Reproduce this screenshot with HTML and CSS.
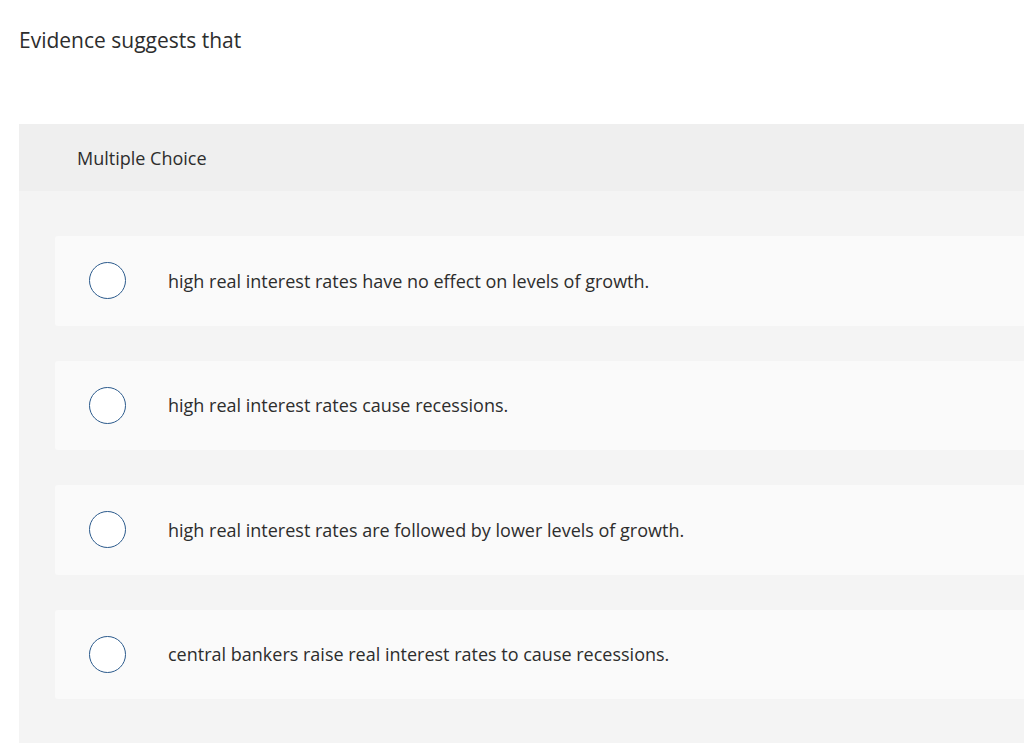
FILE: index.html
```html
<!DOCTYPE html>
<html>
<head>
    <title>Multiple Choice</title>
    <meta charset="UTF-8">
    <link rel="stylesheet" href="styles.css">
</head>
<body>
    <div class="question">Evidence suggests that</div>
    <div class="panel">
        <div class="panel-header">Multiple Choice</div>
        <div class="panel-body">
            <label class="choice">
                <span class="radio"></span>
                <span class="choice-text">high real interest rates have no effect on levels of growth.</span>
            </label>
            <label class="choice">
                <span class="radio"></span>
                <span class="choice-text">high real interest rates cause recessions.</span>
            </label>
            <label class="choice">
                <span class="radio"></span>
                <span class="choice-text">high real interest rates are followed by lower levels of growth.</span>
            </label>
            <label class="choice">
                <span class="radio"></span>
                <span class="choice-text">central bankers raise real interest rates to cause recessions.</span>
            </label>
        </div>
    </div>
</body>
</html>
```

FILE: styles.css
```css
body {
    font-family: 'Open Sans', 'Lato', sans-serif;
    margin: 0;
    background-color: white;
    color: #333;
    overflow: hidden;
}
.question {
    font-size: 21px;
    line-height: 24px;
    padding: 28px 0 0 19px;
    color: #2d2d2d;
}
.panel {
    margin: 72px 0 0 19px;
}
.panel-header {
    background-color: #efefef;
    height: 67px;
    display: flex;
    align-items: center;
    padding-left: 58px;
    font-size: 18px;
    color: #2d2d2d;
}
.panel-body {
    background-color: #f4f4f4;
    padding: 45px 0 45px 36px;
    display: flex;
    flex-direction: column;
    gap: 35px;
}
.choice {
    background-color: #fafafa;
    height: 89.5px;
    display: flex;
    align-items: center;
    padding-left: 34px;
    border-radius: 3px 0 0 3px;
}
.radio {
    width: 35px;
    height: 35px;
    border: 1.5px solid #2b5a8c;
    border-radius: 50%;
    background: white;
    flex-shrink: 0;
}
.choice-text {
    margin-left: 42px;
    font-size: 18px;
    color: #2d2d2d;
}
```
